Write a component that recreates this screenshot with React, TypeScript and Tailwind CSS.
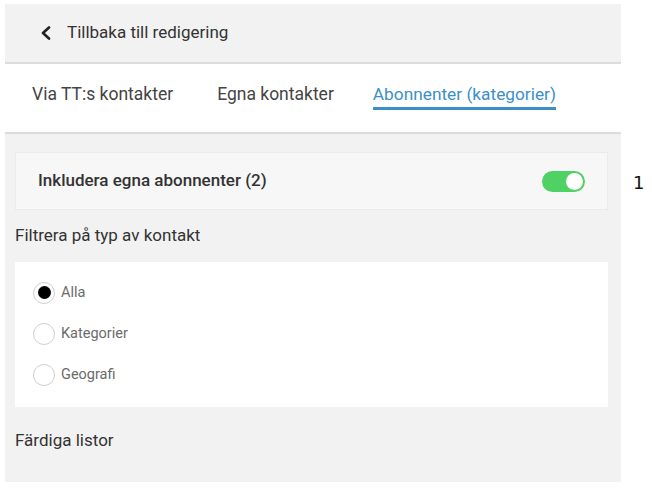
import React from "react";

const font = { fontFamily: "Roboto, 'Noto Sans', sans-serif" };

function Radio({ label, checked }: { label: string; checked?: boolean }) {
  return (
    <div className="flex items-center h-[41px]">
      <div className="w-[22px] h-[22px] rounded-full border border-[#cfcfcf] bg-white flex items-center justify-center">
        {checked && <div className="w-[13px] h-[13px] rounded-full bg-black" />}
      </div>
      <span className="ml-[6px] text-[14.5px] text-[#6b6b6b]">{label}</span>
    </div>
  );
}

export default function App() {
  return (
    <div className="w-[652px] h-[489px] bg-white flex pt-[4px]" style={font}>
      <div className="ml-[5px] w-[616px] h-[478px] flex flex-col">
        <div className="h-[60px] bg-[#f2f2f2] border-b-2 border-[#dcdcdc] flex items-center pl-[34px] shrink-0">
          <svg width="14" height="14" viewBox="0 0 14 14" className="mr-[14px]">
            <path d="M10 1.5 L4 7 L10 12.5" fill="none" stroke="#222" strokeWidth="2.6" strokeLinecap="round" strokeLinejoin="round" />
          </svg>
          <span className="text-[17px] text-[#333]">Tillbaka till redigering</span>
        </div>
        <div className="h-[70px] bg-white border-b-2 border-[#dcdcdc] flex items-start pl-[27px] pt-[19px] shrink-0">
          <div className="flex flex-col items-stretch">
            <span className="text-[17.5px] text-[#444] leading-[22px]">Via TT:s kontakter</span>
          </div>
          <div className="flex flex-col items-stretch ml-[44px]">
            <span className="text-[17.5px] text-[#444] leading-[22px]">Egna kontakter</span>
          </div>
          <div className="flex flex-col items-stretch ml-[39px]">
            <span className="text-[17.3px] text-[#3d8fc6] leading-[22px]">Abonnenter (kategorier)</span>
            <div className="h-[3px] bg-[#3a8fc7] mt-[2px]" />
          </div>
        </div>
        <div className="flex-1 bg-[#f2f2f2] pl-[10px] pr-[13px] pt-[18px]">
          <div className="h-[58px] bg-[#f7f7f7] border border-[#ebebeb] flex items-center justify-between px-[22px]">
            <span className="text-[17px] font-medium text-[#333]">Inkludera egna abonnenter (2)</span>
            <div className="w-[43px] h-[21px] rounded-full bg-[#4fd163] flex items-center justify-end pr-[2px]">
              <div className="w-[17px] h-[17px] rounded-full bg-white" />
            </div>
          </div>
          <div className="h-[52px] flex items-center text-[17px] text-[#333]">Filtrera på typ av kontakt</div>
          <div className="bg-white h-[145px] pl-[18px] pt-[10px]">
            <Radio label="Alla" checked />
            <Radio label="Kategorier" />
            <Radio label="Geografi" />
          </div>
          <div className="h-[68px] flex items-center text-[17px] text-[#333]">Färdiga listor</div>
        </div>
      </div>
      <div className="ml-[12px] mt-[165px] text-[18px] text-[#111]" style={{ fontFamily: "'DejaVu Sans', sans-serif" }}>
        1
      </div>
    </div>
  );
}
